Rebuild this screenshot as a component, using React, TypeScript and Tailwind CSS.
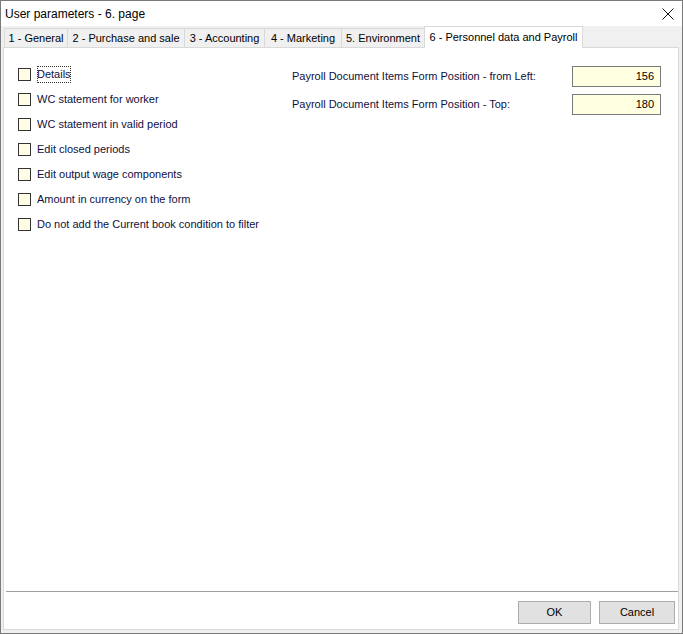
import React from "react";

const tabs = [
  { label: "1 - General", w: "w-[63px]" },
  { label: "2 - Purchase and sale", w: "w-[117px]" },
  { label: "3 - Accounting", w: "w-[80px]" },
  { label: "4 - Marketing", w: "w-[77px]" },
  { label: "5. Environment", w: "w-[83px]" },
];

const options = [
  "Details",
  "WC statement for worker",
  "WC statement in valid period",
  "Edit closed periods",
  "Edit output wage components",
  "Amount in currency on the form",
  "Do not add the Current book condition to filter",
];

const fields = [
  { label: "Payroll Document Items Form Position - from Left:", value: "156" },
  { label: "Payroll Document Items Form Position - Top:", value: "180" },
];

export default function App() {
  return (
    <div
      className="w-[683px] h-[634px] flex flex-col bg-[#f0f0f0] border border-[#7a7a7a] text-[11px] text-black overflow-hidden"
      style={{ fontFamily: '"Liberation Sans", Arial, sans-serif' }}
    >
      {/* title bar */}
      <div className="h-[25px] shrink-0 bg-white flex items-center justify-between pl-[4px] pr-[8px]">
        <span className="text-[12px]">User parameters - 6. page</span>
        <svg width="12" height="12" viewBox="0 0 12 12" className="mt-[1px]">
          <path d="M0.5 0.5 L11.5 11.5 M11.5 0.5 L0.5 11.5" stroke="#111" strokeWidth="1" fill="none" />
        </svg>
      </div>

      <div className="flex-1 flex flex-col px-[2px] pb-[3px]">
        {/* tabs */}
        <div className="h-[22px] shrink-0 flex items-end pl-[1px] -mb-[1px] relative z-10">
          {tabs.map((t) => (
            <div
              key={t.label}
              className={`${t.w} h-[20px] flex items-center justify-center border border-[#d9d9d9] border-r-0 bg-[#f0f0f0] whitespace-nowrap pt-[1px]`}
            >
              {t.label}
            </div>
          ))}
          <div className="w-[159px] h-[22px] flex items-center justify-center bg-white border border-[#d9d9d9] border-b-0 whitespace-nowrap pb-[1px]">
            6 - Personnel data and Payroll
          </div>
        </div>

        {/* panel */}
        <div className="flex-1 flex flex-col bg-white border border-[#d9d9d9] mr-[1px]">
          <div className="flex-1 flex">
            <div className="w-[288px] pl-[14px] pt-[14px] flex flex-col">
              {options.map((o, i) => (
                <div key={o} className="h-[25px] flex items-center text-[#101040]">
                  <span className="w-[13px] h-[13px] border border-[#333] bg-[#fffde6] shrink-0" />
                  <span
                    className={`ml-[6px] whitespace-nowrap ${i === 0 ? "outline outline-1 outline-dotted outline-[#333] -outline-offset-1" : ""}`}
                  >
                    {o}
                  </span>
                </div>
              ))}
            </div>
            <div className="pt-[18px] flex flex-col gap-[7px]">
              {fields.map((f) => (
                <div key={f.label} className="flex items-center h-[21px]">
                  <span className="w-[280px] whitespace-nowrap text-[#101040]">{f.label}</span>
                  <div className="w-[89px] h-[21px] border border-[#7a7a7a] bg-[#ffffe1] flex items-center justify-end pr-[6px]">
                    {f.value}
                  </div>
                </div>
              ))}
            </div>
          </div>

          {/* footer */}
          <div className="shrink-0 ml-[2px] h-px bg-[#a0a0a0]" />
          <div className="shrink-0 flex justify-end gap-[8px] pt-[9px] pb-[5px] pr-[3px]">
            <button className="w-[73px] h-[23px] border border-[#adadad] bg-[#e1e1e1] text-[11px]">OK</button>
            <button className="w-[76px] h-[23px] border border-[#adadad] bg-[#e1e1e1] text-[11px]">Cancel</button>
          </div>
        </div>
      </div>
    </div>
  );
}
